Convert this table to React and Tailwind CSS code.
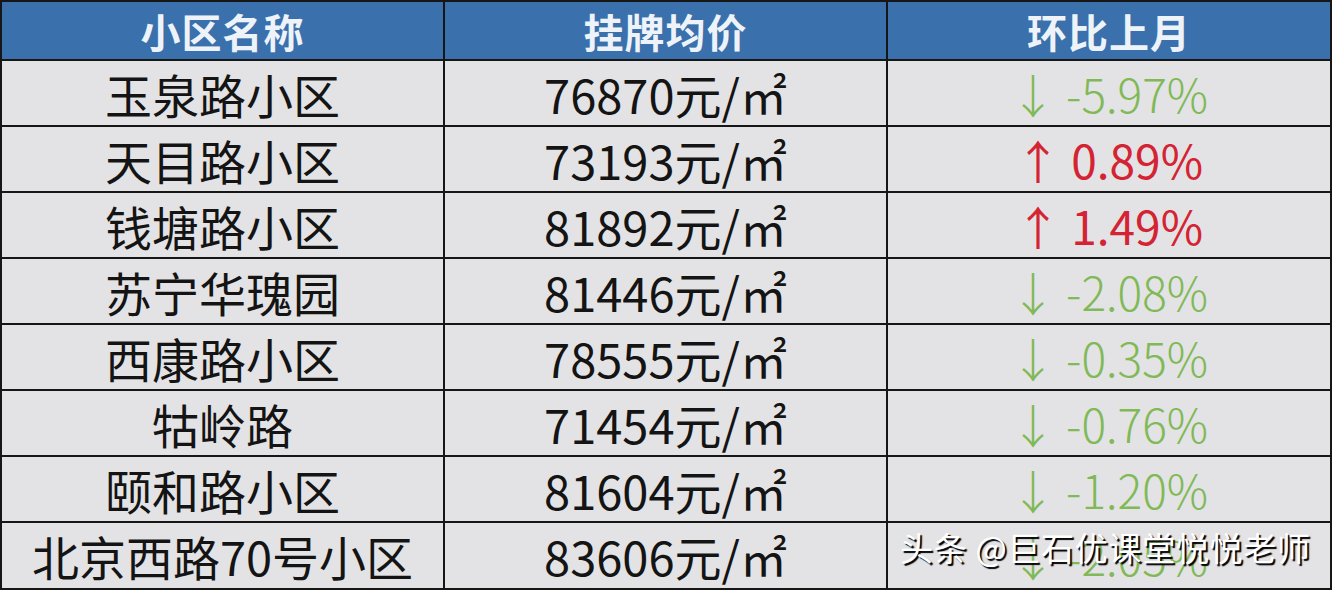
import React from "react";

const rows = [
  { name: "玉泉路小区", price: "76870", change: "↓ -5.97%", up: false },
  { name: "天目路小区", price: "73193", change: "↑ 0.89%", up: true },
  { name: "钱塘路小区", price: "81892", change: "↑ 1.49%", up: true },
  { name: "苏宁华瑰园", price: "81446", change: "↓ -2.08%", up: false },
  { name: "西康路小区", price: "78555", change: "↓ -0.35%", up: false },
  { name: "牯岭路", price: "71454", change: "↓ -0.76%", up: false },
  { name: "颐和路小区", price: "81604", change: "↓ -1.20%", up: false },
  { name: "北京西路70号小区", price: "83606", change: "↓ -2.05%", up: false },
];

const font = { fontFamily: '"Noto Sans CJK SC", "Noto Sans", sans-serif' };

export default function App() {
  return (
    <div className="relative w-[1332px] h-[590px] overflow-hidden" style={font}>
      <div className="grid grid-cols-[441px_441px_1fr] grid-rows-[57px_repeat(7,64px)_1fr] gap-[2px] p-[2px] w-full h-full bg-[#161616]">
        {["小区名称", "挂牌均价", "环比上月"].map((h) => (
          <div
            key={h}
            className="bg-[#3a70ab] flex items-center justify-center text-[40px] font-bold text-[#eef3f9] leading-none tracking-[1px]"
          >
            {h}
          </div>
        ))}
        {rows.map((r) => (
          <React.Fragment key={r.name}>
            <div className="bg-[#e3e3e5] flex items-center justify-center text-[47px] text-[#141414] leading-none">
              {r.name}
            </div>
            <div className="bg-[#e3e3e5] flex items-center justify-center text-[47px] text-[#141414] leading-none">
              {r.price}元/㎡
            </div>
            <div
              className={
                "bg-[#e3e3e5] flex items-center justify-center text-[46px] leading-none " +
                (r.up ? "text-[#d42434] font-normal" : "text-[#80b956] font-light")
              }
            >
              {r.change}
            </div>
          </React.Fragment>
        ))}
      </div>
      <div className="absolute left-[900px] top-[531px] text-[33px] text-white leading-none tracking-[0.7px] [text-shadow:2px_2px_1px_#000]">
        头条 @巨石优课堂悦悦老师
      </div>
    </div>
  );
}
